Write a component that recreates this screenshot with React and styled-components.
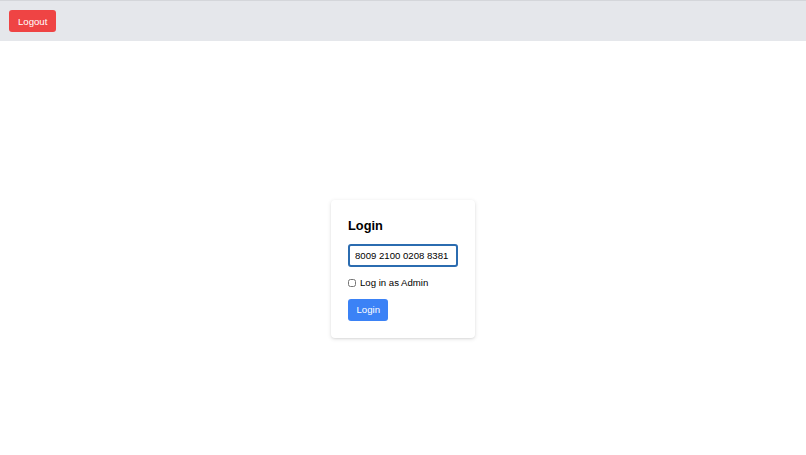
import React from "react";
import styled, { createGlobalStyle } from "styled-components";

const GlobalStyle = createGlobalStyle`
  * { box-sizing: border-box; }
  body {
    margin: 0;
    font-family: "Liberation Sans", Arial, sans-serif;
    background: #ffffff;
    color: #000;
  }
`;

const Header = styled.header`
  height: 41px;
  background: #e5e7eb;
  border-top: 1px solid #d4d6da;
  padding: 9px;
  display: flex;
  align-items: flex-start;
`;

const Button = styled.button`
  border: none;
  border-radius: 3px;
  color: #fff;
  font-family: inherit;
  font-size: 9.6px;
  height: 22px;
  padding: 0 ${(p) => p.$px || 9}px;
  background: ${(p) => p.$color};
  cursor: pointer;
`;

const Main = styled.main`
  min-height: 100vh;
  display: flex;
  align-items: center;
  justify-content: center;
`;

const Card = styled.div`
  width: 144px;
  padding: 17px;
  background: #fff;
  border-radius: 4px;
  box-shadow: 0 1px 4px rgba(0, 0, 0, 0.12), 0 1px 2px rgba(0, 0, 0, 0.06);
  display: flex;
  flex-direction: column;
  align-items: flex-start;
`;

const Title = styled.h2`
  margin: 1px 0 10px;
  font-size: 12.8px;
  line-height: 16px;
  font-weight: 700;
`;

const Input = styled.input`
  width: 110px;
  height: 23px;
  padding: 0 5px;
  border: 2px solid #2b6cb0;
  border-radius: 3px;
  font-family: inherit;
  font-size: 9.6px;
  color: #000;
  outline: none;
  margin-bottom: 10px;
`;

const CheckRow = styled.label`
  display: flex;
  align-items: center;
  gap: 4px;
  font-size: 9.6px;
  line-height: 12px;
  margin-bottom: 10px;
`;

const Check = styled.input`
  margin: 0;
  width: 8px;
  height: 8px;
`;

export default function App() {
  return (
    <>
      <GlobalStyle />
      <Header>
        <Button $color="#ef4444">Logout</Button>
      </Header>
      <Main>
        <Card>
          <Title>Login</Title>
          <Input defaultValue="8009 2100 0208 8381" />
          <CheckRow>
            <Check type="checkbox" />
            Log in as Admin
          </CheckRow>
          <Button $color="#3b82f6" $px={8.5}>Login</Button>
        </Card>
      </Main>
    </>
  );
}
